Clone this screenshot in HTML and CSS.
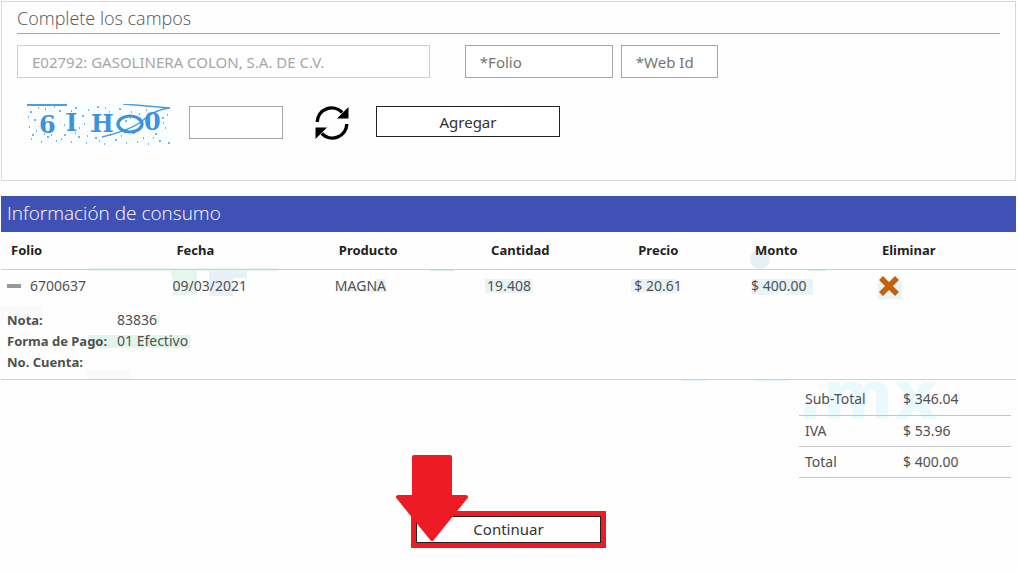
FILE: index.html
```html
<!DOCTYPE html>
<html lang="es">
<head>
<meta charset="utf-8">
<meta name="viewport" content="width=device-width, initial-scale=1">
<title>Facturación</title>
<link rel="stylesheet" href="styles.css">
</head>
<body>
<main class="page">
  <form class="panel">
    <h2 class="panel-title">Complete los campos</h2>
    <div class="fields">
      <input class="field station" type="text" aria-label="Estación" value="E02792: GASOLINERA COLON, S.A. DE C.V." disabled>
      <input class="field folio" type="text" aria-label="Folio" placeholder="*Folio">
      <input class="field web-id" type="text" aria-label="Web Id" placeholder="*Web Id">
    </div>
    <div class="verify">
      <svg class="captcha" width="144" height="42" viewBox="0 0 144 42" role="img" aria-label="Captcha">
        <rect width="144" height="42" fill="#fafeff"/>
        <g fill="none" stroke="#4a9fe0">
          <path d="M0 1H40" stroke-width="2"/>
          <path d="M96 0L143 4Q128 5 115 17Q104 26 75 33" stroke-width="1.6"/>
          <path d="M3 8h2M18 5h1M32 7h2M39 10h1M48 4h2M61 6h1M70 3h2M82 8h1M92 5h2M104 8h1M135 14h2M138 24h1M128 30h2M116 34h1M106 29h2M99 39h1M88 36h2M77 40h1M68 34h2M59 39h1M51 33h2M44 38h1M37 31h2M29 37h1M20 33h2M14 38h1M5 31h2M2 23h1M7 16h2M57 20h1M64 27h2M55 12h2M37 21h1M90 21h2M98 17h2M112 10h1M141 39h2M132 37h2M121 40h1M9 27h1M24 31h1M1 13h1" stroke-width="1.6"/>
          <path d="M11 4h1M27 3h1M44 7h1M52 24h1M60 32h1M34 35h1M17 30h1M48 29h1M72 37h1M83 31h1M94 32h1M110 38h1M126 34h1M136 19h1M140 11h1M119 6h1M78 4h1M66 11h1M4 35h1M103 14h1" stroke="#385c82"/>
        </g>
        <g class="captcha-text">
          <text x="12" y="29">6</text>
          <text x="39" y="27">I</text>
          <text x="64" y="28">H</text>
          <text x="117" y="26">0</text>
        </g>
        <ellipse cx="103" cy="20" rx="12" ry="8" fill="none" stroke="#3a93dc" stroke-width="3.2"/>
      </svg>
      <input class="field code" type="text" aria-label="Código de la imagen">
      <button class="refresh" type="button" aria-label="Actualizar imagen">
        <svg width="34" height="34" viewBox="0 0 34 34">
          <path d="M2.200 16A14.500 14.500 0 0 1 27.200 6.500M31.800 18A14.500 14.500 0 0 1 6.800 27.500" fill="none" stroke="#000" stroke-width="3.400"/>
          <path d="M33.500 1V12.500H22zM.5 33V21.500H12z"/>
        </svg>
      </button>
      <button class="btn add" type="button">Agregar</button>
    </div>
  </form>

  <section class="detail">
    <h2 class="bar">Información de consumo</h2>
    <svg class="watermark" width="1018" height="225" viewBox="0 0 1018 225" aria-hidden="true">
      <path d="M88 36.500H278M430 37H454M808 37H826" stroke="#d2e9e4" stroke-width="2"/>
      <path d="M170 38h27v24h-24V49z" fill="#e7f5ef"/>
      <path d="M209 38h38v7h-14v18h-24z" fill="#e8f0f7"/>
      <path d="M376 46h10v13h-44v-3h34zM485 46h47v14h-47zM631 46h46v14h-20l-26-1zM752 46h61v16h-30l10-4h-13l-12 4h-16zM878 49h24v17h-24z" fill="#e8f3f8"/>
      <circle cx="760" cy="26" r="10" fill="#e5f0f7"/>
      <path d="M88 102h102v13H88zM156 83h3v8h-3z" fill="#e2f5ec"/>
      <path d="M0 73h43v14H0zM86 137h45v9H86z" fill="#fafafa"/>
      <path d="M682 147h24M755 147h32" stroke="#ddf3f8" stroke-width="2"/>
      <svg y="148" width="1018" height="60" viewBox="0 148 1018 60"><text class="ghost" x="797" y="186">.mx</text></svg>
    </svg>
    <table class="items">
      <colgroup><col class="c1"><col class="c2"><col class="c3"><col class="c4"><col class="c5"><col class="c6"><col class="c7"></colgroup>
      <thead>
        <tr><th>Folio</th><th>Fecha</th><th>Producto</th><th>Cantidad</th><th>Precio</th><th>Monto</th><th>Eliminar</th></tr>
      </thead>
      <tbody>
        <tr>
          <td><div class="entry"><button class="toggle" type="button" aria-label="Contraer"></button>6700637</div></td>
          <td>09/03/2021</td><td>MAGNA</td><td>19.408</td><td>$ 20.61</td><td>$ 400.00</td>
          <td><button class="remove" type="button" aria-label="Eliminar"><svg width="22" height="22" viewBox="0 0 22 22"><path d="M3 3L19 19M19 3L3 19" stroke="#c6600f" stroke-width="5.600"/></svg></button></td>
        </tr>
        <tr class="extra">
          <td colspan="7">
            <dl class="notes">
              <dt>Nota:</dt><dd>83836</dd>
              <dt>Forma de Pago:</dt><dd>01 Efectivo</dd>
              <dt>No. Cuenta:</dt><dd></dd>
            </dl>
          </td>
        </tr>
      </tbody>
    </table>
    <table class="totals">
      <tbody>
        <tr><th scope="row">Sub-Total</th><td>$ 346.04</td></tr>
        <tr><th scope="row">IVA</th><td>$ 53.96</td></tr>
        <tr><th scope="row">Total</th><td>$ 400.00</td></tr>
      </tbody>
    </table>
  </section>

  <div class="actions">
    <div class="highlight">
      <button class="btn continue" type="button">Continuar</button>
      <svg class="arrow" width="76" height="88" viewBox="0 0 76 88" aria-hidden="true">
        <path d="M20 2H56V42H72L38 84L4 42H20z" fill="#ed1c24" stroke="#ed1c24" stroke-width="4" stroke-linejoin="round"/>
      </svg>
    </div>
  </div>
</main>
</body>
</html>
```
FILE: styles.css
```css
* { box-sizing: border-box; }

body {
  margin: 0;
  background: #fefefe;
  color: #505050;
  font: 14px/20px "Noto Sans", "Open Sans", sans-serif;
}

button, input { font: inherit; color: inherit; }
button { padding: 0; border: 0; background: none; }

.page { padding: 1px 2px 0 1px; }

.panel {
  min-height: 180px;
  padding: 0 15px;
  border: 1px solid #d8d8d8;
}

.panel-title {
  margin: 0;
  padding: 4px 0 3px;
  border-bottom: 1px solid #a5a5a5;
  color: #555;
  font-family: "Open Sans", sans-serif;
  font-size: 18px;
  font-weight: 300;
  line-height: 24px;
}

.fields { display: flex; align-items: center; padding-top: 11px; }

.field {
  height: 33px;
  padding: 0 14px;
  border: 1px solid #a6a6a6;
  background: #fff;
  font-size: 15px;
}
.field::placeholder { color: #757575; opacity: 1; }

.station {
  width: 42%;
  margin-right: 35px;
  border-color: #cfcfcf;
  color: #a6a6a6;
}
.folio { width: 148px; margin-right: 8px; }
.web-id { width: 97px; }

.verify { display: flex; align-items: flex-start; padding: 26px 0 0 10px; }
.captcha-text {
  fill: #3a93dc;
  font: bold 24px "DejaVu Serif", serif;
}
.code { width: 94px; margin: 2px 0 0 18px; }
.refresh { width: 34px; height: 34px; margin: 2px 0 0 32px; }
.refresh svg { display: block; }

.btn {
  border: 1px solid #222;
  background: #fff;
  color: #333;
  font-size: 15px;
}
.add { width: 184px; height: 31px; margin: 2px 0 0 27px; }

.detail { position: relative; margin-top: 15px; }

.bar {
  margin: 0;
  padding: 5px 6px 7px;
  background: #3f51b5;
  color: #fff;
  font-family: "Open Sans", sans-serif;
  font-size: 19px;
  font-weight: 300;
  line-height: 24px;
}

.watermark { position: absolute; top: 37px; left: -1px; z-index: -1; }
.ghost { fill: #e9fafc; font: bold 68px "DejaVu Sans", sans-serif; }

table { border-collapse: collapse; }

.items { width: 100%; table-layout: fixed; }
.c1 { width: 16.5%; }
.c2 { width: 16%; }
.c3 { width: 15%; }
.c4 { width: 14.5%; }
.c5 { width: 11.5%; }
.c6 { width: 12.5%; }
.c7 { width: 14%; }

.items th {
  height: 37px;
  padding: 0 0 0 8px;
  border-bottom: 1px solid #cfcfcf;
  color: #222;
  font-size: 13px;
  font-weight: 700;
  text-align: left;
}
.items th:first-child { padding-left: 10px; }
.items td { height: 34px; padding: 0 0 0 4px; }
.items td:first-child { padding-left: 6px; }

.entry { display: flex; align-items: center; gap: 9px; }
.toggle { width: 14px; height: 4px; background: #999; }
.remove { display: block; width: 22px; height: 22px; }
.remove svg { display: block; }

.items .extra { border-bottom: 1px solid #cfcfcf; }
.notes {
  display: grid;
  grid-template-columns: 110px 1fr;
  grid-auto-rows: 21px;
  margin: 0;
  padding: 7px 0 6px;
}
.notes dt { font-size: 13px; font-weight: 700; }
.notes dd { margin: 0; }

.totals { width: 212px; margin: 4px 5px 0 auto; }
.totals th, .totals td {
  height: 31px;
  padding: 0 6px;
  border-bottom: 1px solid #c6c6c6;
  font-weight: 400;
  text-align: left;
}
.totals th { width: 98px; }

.actions { display: flex; justify-content: center; padding-top: 33px; }
.highlight {
  position: relative;
  display: flex;
  width: 195px;
  border: 5px solid #ed1c24;
}
.continue { flex: 1; height: 27px; }
.arrow { position: absolute; top: -61px; left: -22px; }
```
